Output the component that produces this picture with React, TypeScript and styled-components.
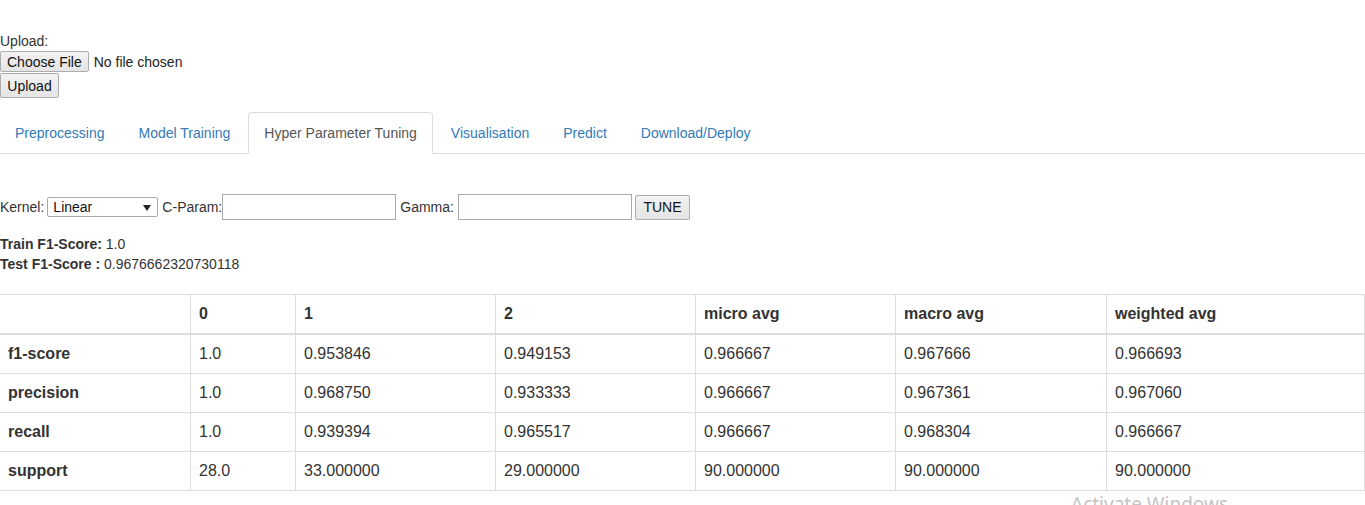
import React from "react";
import styled, { createGlobalStyle } from "styled-components";

const GlobalStyle = createGlobalStyle`
  html, body { margin: 0; padding: 0; background: #fff; }
  body {
    font-family: "Liberation Sans", Arial, Helvetica, sans-serif;
    font-size: 14px;
    line-height: 20px;
    color: #333;
    overflow: hidden;
  }
  * { box-sizing: border-box; }
`;

const Page = styled.div`
  padding-top: 31px;
  position: relative;
  min-height: 505px;
`;

const UploadForm = styled.form`
  display: flex;
  flex-direction: column;
  align-items: flex-start;
`;

const FieldLabel = styled.label`
  display: block;
  line-height: 20px;
  height: 20px;
`;

const FileInput = styled.input`
  font-family: "Liberation Sans", Arial, sans-serif;
  font-size: 14px;
  color: #222;
  height: 21px;
  line-height: 21px;
  width: 260px;
  &::file-selector-button {
    font-family: "Liberation Sans", Arial, sans-serif;
    font-size: 14px;
    height: 21px;
    padding: 0 6px;
    margin: 0 5px 0 0;
    border: 1px solid #adadad;
    border-radius: 2px;
    background: linear-gradient(#f2f2f2, #e4e4e4);
    color: #111;
  }
`;

const NativeButton = styled.button<{ $h: number; $w: number }>`
  font-family: "Liberation Sans", Arial, sans-serif;
  font-size: 14px;
  color: #111;
  height: ${(p) => p.$h}px;
  width: ${(p) => p.$w}px;
  padding: 0;
  border: 1px solid #adadad;
  border-radius: 2px;
  background: linear-gradient(#f2f2f2, #e4e4e4);
  text-align: center;
`;

const UploadButton = styled(NativeButton)`
  margin-top: 1px;
`;

const Tabs = styled.ul`
  list-style: none;
  margin: 14px 0 0 -1px;
  padding: 0;
  display: flex;
  border-bottom: 1px solid #ddd;
`;

const TabItem = styled.li`
  margin-bottom: -1px;
`;

const TabLink = styled.a<{ $active?: boolean }>`
  display: block;
  margin-right: 2px;
  padding: 10px 15px;
  line-height: 20px;
  border: 1px solid ${(p) => (p.$active ? "#ddd" : "transparent")};
  border-bottom-color: transparent;
  border-radius: 4px 4px 0 0;
  background: ${(p) => (p.$active ? "#fff" : "transparent")};
  color: ${(p) => (p.$active ? "#555" : "#337ab7")};
  text-decoration: none;
  cursor: pointer;
`;

const TuneRow = styled.div`
  display: flex;
  align-items: center;
  height: 26px;
  margin-top: 40px;
`;

const InlineLabel = styled.span<{ $ml?: number }>`
  margin-left: ${(p) => p.$ml ?? 0}px;
  white-space: pre;
`;

const SelectWrap = styled.span`
  position: relative;
  display: inline-flex;
  margin-left: 3px;
  &::after {
    content: "";
    position: absolute;
    right: 7px;
    top: 8px;
    border-left: 4px solid transparent;
    border-right: 4px solid transparent;
    border-top: 6px solid #222;
    pointer-events: none;
  }
`;

const KernelSelect = styled.select`
  appearance: none;
  -webkit-appearance: none;
  font-family: "Liberation Sans", Arial, sans-serif;
  font-size: 14px;
  color: #111;
  width: 111px;
  height: 20px;
  padding: 0 16px 0 5px;
  border: 1px solid #a9a9a9;
  border-radius: 2px;
  background: #fff;
`;

const TextField = styled.input<{ $ml: number }>`
  width: 174px;
  height: 26px;
  margin-left: ${(p) => p.$ml}px;
  border: 1px solid #a9a9a9;
  border-radius: 0;
  font-family: "Liberation Sans", Arial, sans-serif;
  font-size: 14px;
  padding: 2px 4px;
`;

const TuneButton = styled(NativeButton)`
  margin-left: 3px;
`;

const Scores = styled.div`
  margin-top: 14px;
`;

const ScoreLine = styled.div`
  line-height: 20px;
  height: 20px;
`;

const Table = styled.table`
  margin-top: 20px;
  width: 1365px;
  table-layout: fixed;
  border-collapse: separate;
  border-spacing: 0;
  border-top: 1px solid #ddd;
  font-size: 16px;
  line-height: 22px;
`;

const Cell = styled.td<{ $w?: number; $head?: boolean; $bold?: boolean; $first?: boolean; $last?: boolean }>`
  ${(p) => (p.$w ? `width: ${p.$w}px;` : "")}
  padding: 8px;
  height: ${(p) => (p.$head ? 40 : 39)}px;
  text-align: left;
  vertical-align: top;
  font-weight: ${(p) => (p.$bold ? 700 : 400)};
  border-bottom: ${(p) => (p.$head ? 2 : 1)}px solid #ddd;
  border-left: ${(p) => (p.$first ? "0" : "1px solid #ddd")};
  border-right: ${(p) => (p.$last ? "1px solid #ddd" : "0")};
  white-space: nowrap;
`;

const Watermark = styled.div`
  position: absolute;
  left: 1071px;
  top: 494px;
  font-family: "Noto Sans", "Open Sans", sans-serif;
  font-size: 19px;
  line-height: 20px;
  color: #c4c4c4;
  white-space: nowrap;
  pointer-events: none;
`;

const colWidths = [190, 105, 200, 200, 200, 211, 259];
const headers = ["", "0", "1", "2", "micro avg", "macro avg", "weighted avg"];
const rows: string[][] = [
  ["f1-score", "1.0", "0.953846", "0.949153", "0.966667", "0.967666", "0.966693"],
  ["precision", "1.0", "0.968750", "0.933333", "0.966667", "0.967361", "0.967060"],
  ["recall", "1.0", "0.939394", "0.965517", "0.966667", "0.968304", "0.966667"],
  ["support", "28.0", "33.000000", "29.000000", "90.000000", "90.000000", "90.000000"],
];

const tabs = [
  "Preprocessing",
  "Model Training",
  "Hyper Parameter Tuning",
  "Visualisation",
  "Predict",
  "Download/Deploy",
];

export default function App() {
  return (
    <Page>
      <GlobalStyle />
      <UploadForm onSubmit={(e) => e.preventDefault()}>
        <FieldLabel htmlFor="file">Upload:</FieldLabel>
        <FileInput id="file" type="file" />
        <UploadButton type="submit" $h={25} $w={59}>
          Upload
        </UploadButton>
      </UploadForm>

      <Tabs>
        {tabs.map((t) => (
          <TabItem key={t}>
            <TabLink $active={t === "Hyper Parameter Tuning"}>{t}</TabLink>
          </TabItem>
        ))}
      </Tabs>

      <TuneRow>
        <InlineLabel>Kernel:</InlineLabel>
        <SelectWrap>
          <KernelSelect defaultValue="Linear">
            <option>Linear</option>
            <option>RBF</option>
            <option>Poly</option>
            <option>Sigmoid</option>
          </KernelSelect>
        </SelectWrap>
        <InlineLabel $ml={4}>C-Param:</InlineLabel>
        <TextField $ml={0} type="text" />
        <InlineLabel $ml={4}>Gamma:</InlineLabel>
        <TextField $ml={4} type="text" />
        <TuneButton $h={25} $w={55}>
          TUNE
        </TuneButton>
      </TuneRow>

      <Scores>
        <ScoreLine>
          <b>Train F1-Score:</b> 1.0
        </ScoreLine>
        <ScoreLine>
          <b>Test F1-Score :</b> 0.9676662320730118
        </ScoreLine>
      </Scores>

      <Table>
        <thead>
          <tr>
            {headers.map((h, i) => (
              <Cell
                as="th"
                key={i}
                $w={colWidths[i]}
                $head
                $bold
                $first={i === 0}
                $last={i === headers.length - 1}
              >
                {h}
              </Cell>
            ))}
          </tr>
        </thead>
        <tbody>
          {rows.map((r) => (
            <tr key={r[0]}>
              {r.map((c, i) => (
                <Cell key={i} $bold={i === 0} $first={i === 0} $last={i === r.length - 1}>
                  {c}
                </Cell>
              ))}
            </tr>
          ))}
        </tbody>
      </Table>

      <Watermark>Activate Windows</Watermark>
    </Page>
  );
}
